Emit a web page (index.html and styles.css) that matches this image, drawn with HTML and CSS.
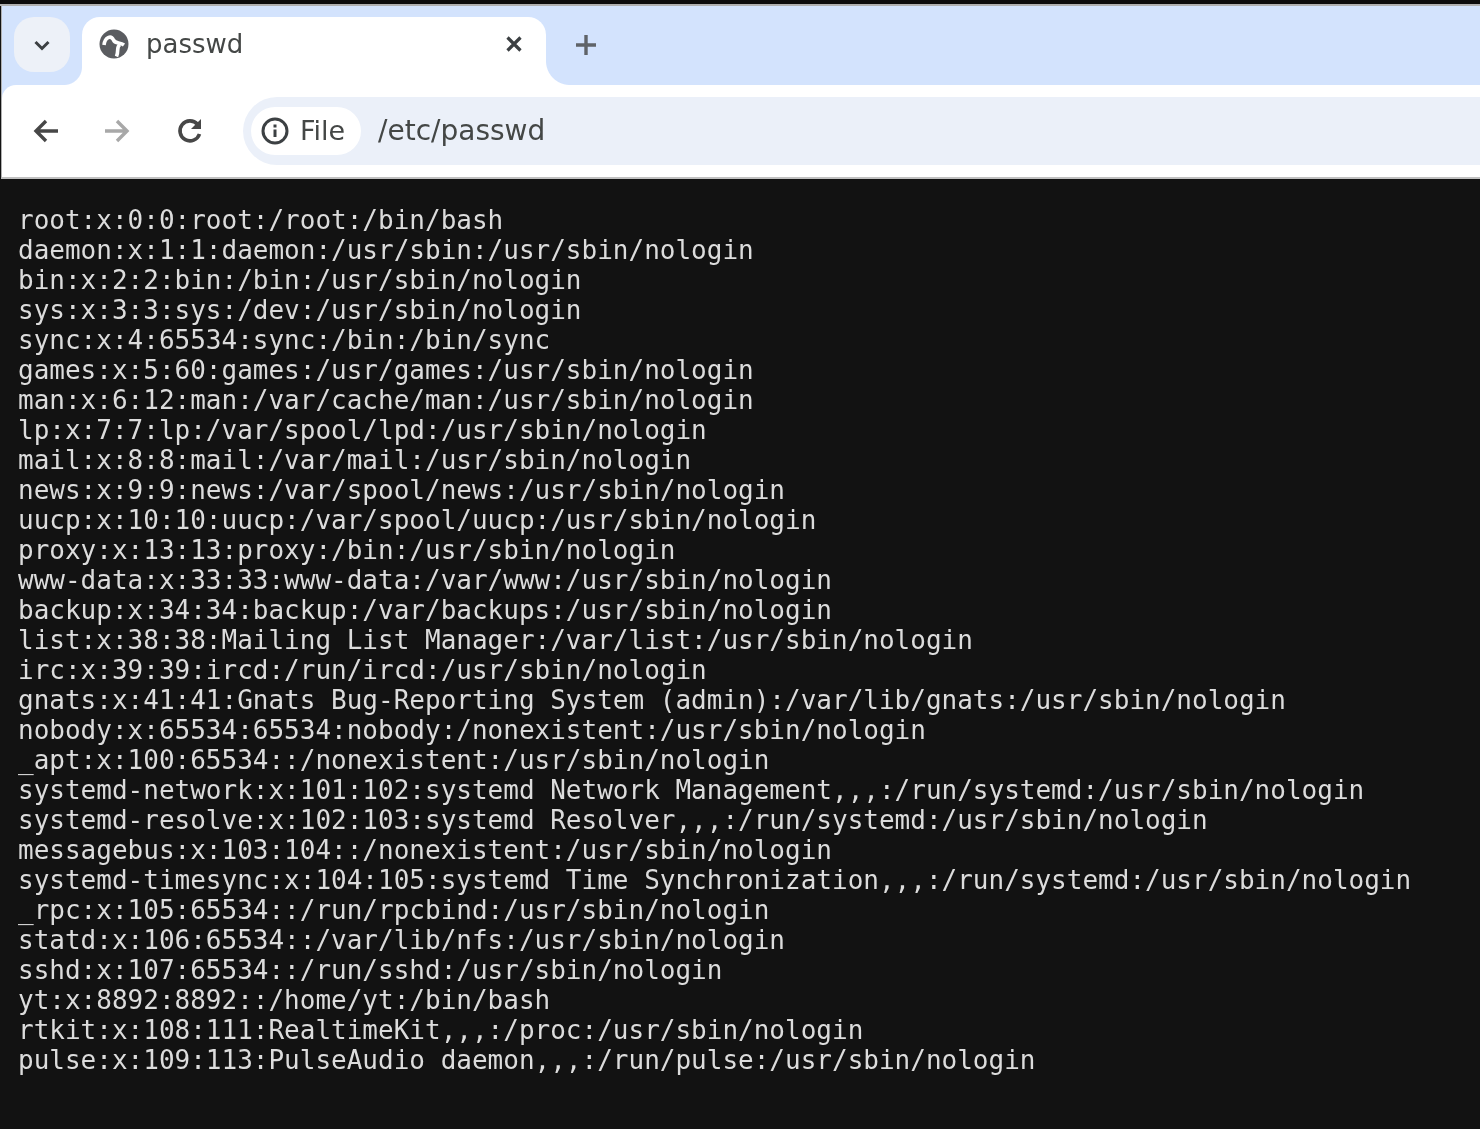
FILE: index.html
```html
<!DOCTYPE html>
<html lang="en">
<head>
<meta charset="utf-8">
<title>passwd</title>
<link rel="stylesheet" href="styles.css">
</head>
<body>
<div class="topline"></div>
<div class="chrome">
  <div class="tabstrip">
    <button class="tabsearch" aria-label="Search tabs">
      <svg width="24" height="24" viewBox="0 0 24 24"><path d="M5.500 9l6.500 6.500L18.500 9" fill="none" stroke="#3c4043" stroke-width="3"/></svg>
    </button>
    <div class="tab">
      <svg class="favicon" width="30" height="30" viewBox="0 0 30 30"><circle cx="15" cy="15" r="14.500" fill="#5a5c60"/><path d="M5 16C6 8 12 6 14.500 11 16 15 21 13 25 16" fill="none" stroke="#fff" stroke-width="3.600"/><path d="M21 15.500C17 18 20 22 17.500 27.500" fill="none" stroke="#fff" stroke-width="3.600"/></svg>
      <span class="tabtitle">passwd</span>
      <svg class="close" width="20" height="20" viewBox="0 0 20 20"><path d="M3.500 3.500l13 13M16.500 3.500l-13 13" stroke="#3c4043" stroke-width="3.200" fill="none"/></svg>
    </div>
    <svg class="newtab" width="24" height="24" viewBox="0 0 24 24"><path d="M12 2v20M2 12h20" stroke="#5f6368" stroke-width="3.400" fill="none"/></svg>
  </div>
  <div class="toolbar">
    <svg class="nav" width="28" height="28" viewBox="0 0 28 28"><path d="M26 14H5M14 4L4 14l10 10" fill="none" stroke="#474747" stroke-width="3.400"/></svg>
    <svg class="nav fwd" width="28" height="28" viewBox="0 0 28 28"><path d="M2 14h21M14 4l10 10-10 10" fill="none" stroke="#a8a8a8" stroke-width="3.400"/></svg>
    <svg class="nav reload" width="30" height="30" viewBox="0 0 30 30"><path d="M24.500 18a10 10 0 1 1-2-9.800" fill="none" stroke="#474747" stroke-width="3.600"/><path d="M26 3v10H16z" fill="#474747"/></svg>
    <div class="omnibox">
      <div class="chip">
        <svg width="28" height="28" viewBox="0 0 28 28"><circle cx="14" cy="14" r="12" fill="none" stroke="#3c4043" stroke-width="3"/><path d="M14 12.500v7.500M14 7.500v3" stroke="#3c4043" stroke-width="3" fill="none"/></svg>
        <span class="chiptext">File</span>
      </div>
      <span class="url">/etc/passwd</span>
    </div>
  </div>
</div>
<pre class="content">root:x:0:0:root:/root:/bin/bash
daemon:x:1:1:daemon:/usr/sbin:/usr/sbin/nologin
bin:x:2:2:bin:/bin:/usr/sbin/nologin
sys:x:3:3:sys:/dev:/usr/sbin/nologin
sync:x:4:65534:sync:/bin:/bin/sync
games:x:5:60:games:/usr/games:/usr/sbin/nologin
man:x:6:12:man:/var/cache/man:/usr/sbin/nologin
lp:x:7:7:lp:/var/spool/lpd:/usr/sbin/nologin
mail:x:8:8:mail:/var/mail:/usr/sbin/nologin
news:x:9:9:news:/var/spool/news:/usr/sbin/nologin
uucp:x:10:10:uucp:/var/spool/uucp:/usr/sbin/nologin
proxy:x:13:13:proxy:/bin:/usr/sbin/nologin
www-data:x:33:33:www-data:/var/www:/usr/sbin/nologin
backup:x:34:34:backup:/var/backups:/usr/sbin/nologin
list:x:38:38:Mailing List Manager:/var/list:/usr/sbin/nologin
irc:x:39:39:ircd:/run/ircd:/usr/sbin/nologin
gnats:x:41:41:Gnats Bug-Reporting System (admin):/var/lib/gnats:/usr/sbin/nologin
nobody:x:65534:65534:nobody:/nonexistent:/usr/sbin/nologin
_apt:x:100:65534::/nonexistent:/usr/sbin/nologin
systemd-network:x:101:102:systemd Network Management,,,:/run/systemd:/usr/sbin/nologin
systemd-resolve:x:102:103:systemd Resolver,,,:/run/systemd:/usr/sbin/nologin
messagebus:x:103:104::/nonexistent:/usr/sbin/nologin
systemd-timesync:x:104:105:systemd Time Synchronization,,,:/run/systemd:/usr/sbin/nologin
_rpc:x:105:65534::/run/rpcbind:/usr/sbin/nologin
statd:x:106:65534::/var/lib/nfs:/usr/sbin/nologin
sshd:x:107:65534::/run/sshd:/usr/sbin/nologin
yt:x:8892:8892::/home/yt:/bin/bash
rtkit:x:108:111:RealtimeKit,,,:/proc:/usr/sbin/nologin
pulse:x:109:113:PulseAudio daemon,,,:/run/pulse:/usr/sbin/nologin</pre>
</body>
</html>
```
FILE: styles.css
```css
html, body {
  margin: 0;
  height: 100%;
  overflow: hidden;
  background: #121212;
}
.topline {
  height: 4px;
  background: #0c0c0c;
  border-bottom: 2px solid #b0b0b0;
}
.chrome {
  margin-left: 1px;
  border-left: 1px solid #b0b0b0;
  background: #d3e3fd;
  border-bottom: 2px solid #c0c0c0;
}
.tabstrip {
  height: 79px;
  display: flex;
  align-items: flex-start;
  padding: 11px 0 0 12px;
  box-sizing: border-box;
}
.tabsearch {
  width: 56px;
  height: 55px;
  padding: 0;
  border: 0;
  border-radius: 20px;
  background: #edf1f8;
  display: flex;
  align-items: center;
  justify-content: center;
}
.tab {
  position: relative;
  margin-left: 12px;
  width: 464px;
  height: 68px;
  background: #fff;
  border-radius: 18px 18px 0 0;
  display: flex;
  align-items: flex-start;
  padding: 12px 22px 0 17px;
  box-sizing: border-box;
}
.tab::before,
.tab::after {
  content: "";
  position: absolute;
  bottom: 0;
  width: 24px;
  height: 24px;
}
.tab::before {
  right: 100%;
  width: 18px;
  height: 18px;
  background: radial-gradient(circle at 0 0, #d3e3fd 17.500px, #fff 18.500px);
}
.tab::after {
  left: 100%;
  background: radial-gradient(circle at 100% 0, #d3e3fd 23.500px, #fff 24.500px);
}
.favicon {
  flex: none;
}
.tabtitle {
  margin-left: 17px;
  flex: 1;
  font: 26px/30px "DejaVu Sans", sans-serif;
  color: #444746;
}
.close {
  flex: none;
  margin-top: 5px;
}
.newtab {
  margin: 16px 0 0 28px;
  flex: none;
}
.toolbar {
  height: 92px;
  background: #fff;
  border-radius: 14px 0 0 0;
  display: flex;
  align-items: center;
  padding-left: 30px;
  box-sizing: border-box;
}
.nav {
  flex: none;
  margin-right: 43px;
}
.reload {
  margin-left: 1px;
  margin-right: 38px;
}
.omnibox {
  flex: 1;
  height: 68px;
  background: #ebf0f9;
  border-radius: 34px 0 0 34px;
  display: flex;
  align-items: center;
  padding-left: 8px;
}
.chip {
  width: 110px;
  height: 48px;
  box-sizing: border-box;
  border-radius: 24px;
  background: #fff;
  display: flex;
  align-items: center;
  padding-left: 10px;
  gap: 11px;
}
.chiptext {
  font: 27px/30px "DejaVu Sans", sans-serif;
  color: #444746;
}
.url {
  margin-left: 17px;
  font: 28px/34px "DejaVu Sans", sans-serif;
  color: #444746;
}
.tabstrip svg,
.toolbar svg,
.tabtitle,
.chiptext,
.url {
  filter: blur(0.6px);
}
.content {
  margin: 0;
  padding: 26px 0 0 18px;
  font: 26px/30px "DejaVu Sans Mono", monospace;
  color: #dcdcdc;
  filter: blur(0.6px);
}
```
